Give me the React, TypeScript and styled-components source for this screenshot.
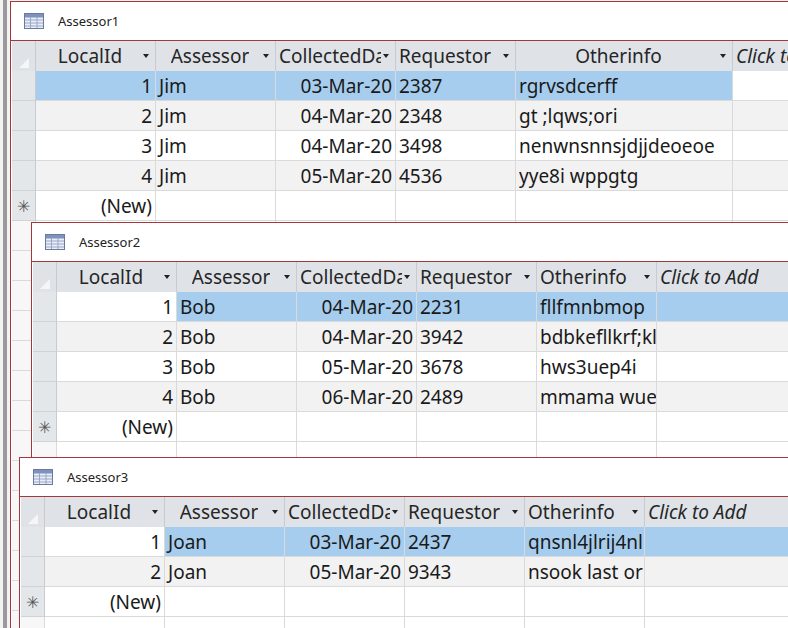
import React from 'react';
import styled, { createGlobalStyle } from 'styled-components';

type Row = { id: string; assessor: string; date: string; req: string; info: string };

type Col = { label: string; width: number; align: 'left' | 'center'; italic?: boolean };

const GlobalStyle = createGlobalStyle`
  html, body { margin: 0; padding: 0; }
  body {
    width: 788px;
    height: 628px;
    overflow: hidden;
    background: #fff;
    font-family: "Noto Sans", "Open Sans", sans-serif;
  }
`;

const Desktop = styled.div`
  position: relative;
  width: 788px;
  height: 628px;
  overflow: hidden;
  background: #f3f3f3;
`;

const Rail = styled.div`
  position: absolute;
  left: 3px;
  top: 0;
  bottom: 0;
  width: 4px;
  background: #9a9a9a;
`;

const Window = styled.div<{ $x: number; $y: number; $h: number }>`
  position: absolute;
  left: ${(p) => p.$x}px;
  top: ${(p) => p.$y}px;
  width: ${(p) => 800 - p.$x}px;
  height: ${(p) => p.$h}px;
  border: 1px solid #a4373a;
  background: #fff;
  overflow: hidden;
  display: flex;
  flex-direction: column;
`;

const TitleBar = styled.div`
  height: 38px;
  display: flex;
  align-items: center;
  gap: 14px;
  padding-left: 13px;
  font-size: 13px;
  color: #222;
  border-bottom: 1px solid #a4373a;
  flex-shrink: 0;
`;

const Grid = styled.div<{ $cols: string }>`
  display: grid;
  grid-template-columns: ${(p) => p.$cols};
  grid-auto-rows: 30px;
  margin-left: 1px;
`;

const Corner = styled.div`
  background: #dfe3e8;
  border-right: 1px solid #c8ccd1;
  position: relative;
  &:after {
    content: '';
    position: absolute;
    left: 7px;
    bottom: 3px;
    border-style: solid;
    border-width: 0 0 10px 10px;
    border-color: transparent transparent #f4f6f8 transparent;
  }
`;

const HeadCell = styled.div<{ $align: 'left' | 'center'; $italic?: boolean }>`
  background: #dfe3e8;
  border-right: 1px solid #c8ccd1;
  display: flex;
  align-items: center;
  padding: 0 14px 0 3px;
  position: relative;
  font-size: 19px;
  color: #262626;
  font-style: ${(p) => (p.$italic ? 'italic' : 'normal')};
  overflow: hidden;
  white-space: nowrap;
  justify-content: ${(p) => (p.$align === 'center' ? 'center' : 'flex-start')};
  &:after {
    content: '';
    position: absolute;
    right: 6px;
    top: 13px;
    border-style: solid;
    border-width: 4px 3.5px 0 3.5px;
    border-color: #222 transparent transparent transparent;
  }
`;

const HeadText = styled.span`
  overflow: hidden;
`;

const Selector = styled.div`
  background: #e4e7ea;
  border-right: 1px solid #c8ccd1;
  border-bottom: 1px solid #cfd3d7;
  font-size: 16px;
  color: #555;
  display: flex;
  align-items: center;
  justify-content: center;
`;

const Cell = styled.div<{ $right?: boolean; $bg: string }>`
  background: ${(p) => p.$bg};
  border-right: 1px solid #dadada;
  border-bottom: 1px solid #dadada;
  font-size: 19px;
  color: #1a1a1a;
  display: flex;
  align-items: center;
  justify-content: ${(p) => (p.$right ? 'flex-end' : 'flex-start')};
  padding: 0 3px;
  white-space: nowrap;
  overflow: hidden;
`;

function TableIcon() {
  return (
    <svg width="20" height="16" viewBox="0 0 20 16">
      <rect x="0.5" y="0.5" width="19" height="15" fill="#e8eefa" stroke="#6b7a99" />
      <rect x="1" y="1" width="18" height="3.5" fill="#7f92bd" />
      {[5, 8, 11].map((y) => (
        <line key={y} x1="1" y1={y + 2} x2="19" y2={y + 2} stroke="#9aa7c6" />
      ))}
      {[6.5, 13].map((x) => (
        <line key={x} x1={x} y1="4" x2={x} y2="15" stroke="#9aa7c6" />
      ))}
    </svg>
  );
}

const SEL = '#a6cdee';
const ALT = '#f2f2f2';

function Datasheet({
  title,
  x,
  y,
  h,
  cols,
  rows,
  firstIdSelected,
  filler,
}: {
  title: string;
  x: number;
  y: number;
  h: number;
  cols: Col[];
  rows: Row[];
  firstIdSelected: boolean;
  filler: number;
}) {
  const template = '24px ' + cols.map((c) => `${c.width}px`).join(' ');
  const wide = cols[4].width > 150;
  const lastBg = (i: number, sel: boolean) => (sel && wide ? '#fff' : sel ? SEL : i % 2 ? ALT : '#fff');

  return (
    <Window $x={x} $y={y} $h={h}>
      <TitleBar>
        <TableIcon />
        {title}
      </TitleBar>
      <Grid $cols={template}>
        <Corner />
        {cols.map((c) => (
          <HeadCell key={c.label} $align={c.align} $italic={c.italic}>
            <HeadText>{c.label}</HeadText>
          </HeadCell>
        ))}
        {rows.map((r, i) => {
          const sel = i === 0;
          const bg = sel ? SEL : i % 2 ? ALT : '#fff';
          return (
            <React.Fragment key={r.id}>
              <Selector />
              <Cell $right $bg={sel && !firstIdSelected ? '#fff' : bg}>{r.id}</Cell>
              <Cell $bg={bg}>{r.assessor}</Cell>
              <Cell $right $bg={bg}>{r.date}</Cell>
              <Cell $bg={bg}>{r.req}</Cell>
              <Cell $bg={bg}>{r.info}</Cell>
              <Cell $bg={lastBg(i, sel)} />
            </React.Fragment>
          );
        })}
        <Selector>✳</Selector>
        <Cell $right $bg="#fff">(New)</Cell>
        {[0, 1, 2, 3, 4].map((k) => (
          <Cell key={k} $bg="#fff" />
        ))}
        {Array.from({ length: filler }).map((_, k) => (
          <React.Fragment key={'f' + k}>
            <Cell $bg="#f7f7f7" />
            {[0, 1, 2, 3, 4, 5].map((j) => (
              <Cell key={j} $bg="#fff" />
            ))}
          </React.Fragment>
        ))}
      </Grid>
    </Window>
  );
}

const columns = (w: number): Col[] => [
  { label: 'LocalId', width: 120, align: 'center' },
  { label: 'Assessor', width: 120, align: 'center' },
  { label: 'CollectedDate', width: 120, align: 'left' },
  { label: 'Requestor', width: 120, align: 'left' },
  { label: 'Otherinfo', width: w, align: w > 150 ? 'center' : 'left' },
  { label: 'Click to Add', width: 200, align: 'left', italic: true },
];

export default function App() {
  return (
    <Desktop>
      <GlobalStyle />
      <Rail />
      <Datasheet
        title="Assessor1"
        x={10}
        y={1}
        h={700}
        cols={columns(217)}
        firstIdSelected
        filler={14}
        rows={[
          { id: '1', assessor: 'Jim', date: '03-Mar-20', req: '2387', info: 'rgrvsdcerff' },
          { id: '2', assessor: 'Jim', date: '04-Mar-20', req: '2348', info: 'gt ;lqws;ori' },
          { id: '3', assessor: 'Jim', date: '04-Mar-20', req: '3498', info: 'nenwnsnnsjdjjdeoeoe' },
          { id: '4', assessor: 'Jim', date: '05-Mar-20', req: '4536', info: 'yye8i wppgtg' },
        ]}
      />
      <Datasheet
        title="Assessor2"
        x={31}
        y={222}
        h={236}
        cols={columns(120)}
        firstIdSelected={false}
        filler={1}
        rows={[
          { id: '1', assessor: 'Bob', date: '04-Mar-20', req: '2231', info: 'fllfmnbmop' },
          { id: '2', assessor: 'Bob', date: '04-Mar-20', req: '3942', info: 'bdbkefllkrf;kl' },
          { id: '3', assessor: 'Bob', date: '05-Mar-20', req: '3678', info: 'hws3uep4i' },
          { id: '4', assessor: 'Bob', date: '06-Mar-20', req: '2489', info: 'mmama wuey' },
        ]}
      />
      <Datasheet
        title="Assessor3"
        x={19}
        y={457}
        h={200}
        cols={columns(120)}
        firstIdSelected={false}
        filler={1}
        rows={[
          { id: '1', assessor: 'Joan', date: '03-Mar-20', req: '2437', info: 'qnsnl4jlrij4nl' },
          { id: '2', assessor: 'Joan', date: '05-Mar-20', req: '9343', info: 'nsook last or' },
        ]}
      />
    </Desktop>
  );
}
